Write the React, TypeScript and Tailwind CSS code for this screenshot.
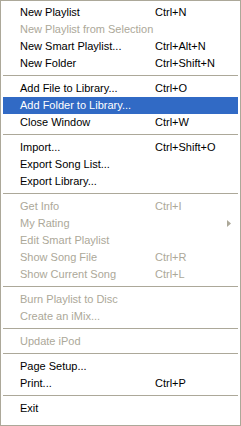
import React, {FC} from "react";

type Entry =
    | {kind: "item", label: string, shortcut?: string, disabled?: boolean, active?: boolean, submenu?: boolean}
    | {kind: "sep"}

const entries: Entry[] = [
    {kind: "item", label: "New Playlist", shortcut: "Ctrl+N"},
    {kind: "item", label: "New Playlist from Selection", disabled: true},
    {kind: "item", label: "New Smart Playlist...", shortcut: "Ctrl+Alt+N"},
    {kind: "item", label: "New Folder", shortcut: "Ctrl+Shift+N"},
    {kind: "sep"},
    {kind: "item", label: "Add File to Library...", shortcut: "Ctrl+O"},
    {kind: "item", label: "Add Folder to Library...", active: true},
    {kind: "item", label: "Close Window", shortcut: "Ctrl+W"},
    {kind: "sep"},
    {kind: "item", label: "Import...", shortcut: "Ctrl+Shift+O"},
    {kind: "item", label: "Export Song List..."},
    {kind: "item", label: "Export Library..."},
    {kind: "sep"},
    {kind: "item", label: "Get Info", shortcut: "Ctrl+I", disabled: true},
    {kind: "item", label: "My Rating", disabled: true, submenu: true},
    {kind: "item", label: "Edit Smart Playlist", disabled: true},
    {kind: "item", label: "Show Song File", shortcut: "Ctrl+R", disabled: true},
    {kind: "item", label: "Show Current Song", shortcut: "Ctrl+L", disabled: true},
    {kind: "sep"},
    {kind: "item", label: "Burn Playlist to Disc", disabled: true},
    {kind: "item", label: "Create an iMix...", disabled: true},
    {kind: "sep"},
    {kind: "item", label: "Update iPod", disabled: true},
    {kind: "sep"},
    {kind: "item", label: "Page Setup..."},
    {kind: "item", label: "Print...", shortcut: "Ctrl+P"},
    {kind: "sep"},
    {kind: "item", label: "Exit"},
]

const MenuRow: FC<{entry: Extract<Entry, {kind: "item"}>}> = ({entry}) => {
    const color = entry.active ? "bg-[#316ac5] text-white" : entry.disabled ? "text-[#aca899]" : "text-black"
    return (
        <div className={`mx-[2px] flex h-[17px] items-center pl-[17px] leading-[17px] ${color}`}>
            <span className="w-[135px] shrink-0 whitespace-nowrap">{entry.label}</span>
            <span className="flex-1 whitespace-nowrap">{entry.shortcut}</span>
            {entry.submenu && (
                <svg width="4" height="7" viewBox="0 0 4 7" className="mr-[7px]">
                    <path d="M0 0 L4 3.5 L0 7 Z" fill="#aca899" />
                </svg>
            )}
        </div>
    )
}

const App: FC = () => {
    return (
        <div className="h-[426px] w-[241px] border border-[#aca899] bg-white pt-[3px] text-[11px] font-['Liberation_Sans',Arial,sans-serif]">
            {entries.map((entry, i) =>
                entry.kind === "sep" ? (
                    <div key={i} className="flex h-[8px] items-start pt-[3px]">
                        <div className="mx-[2px] h-px flex-1 bg-[#aca899]" />
                    </div>
                ) : (
                    <MenuRow key={i} entry={entry} />
                )
            )}
        </div>
    )
}

export default App
